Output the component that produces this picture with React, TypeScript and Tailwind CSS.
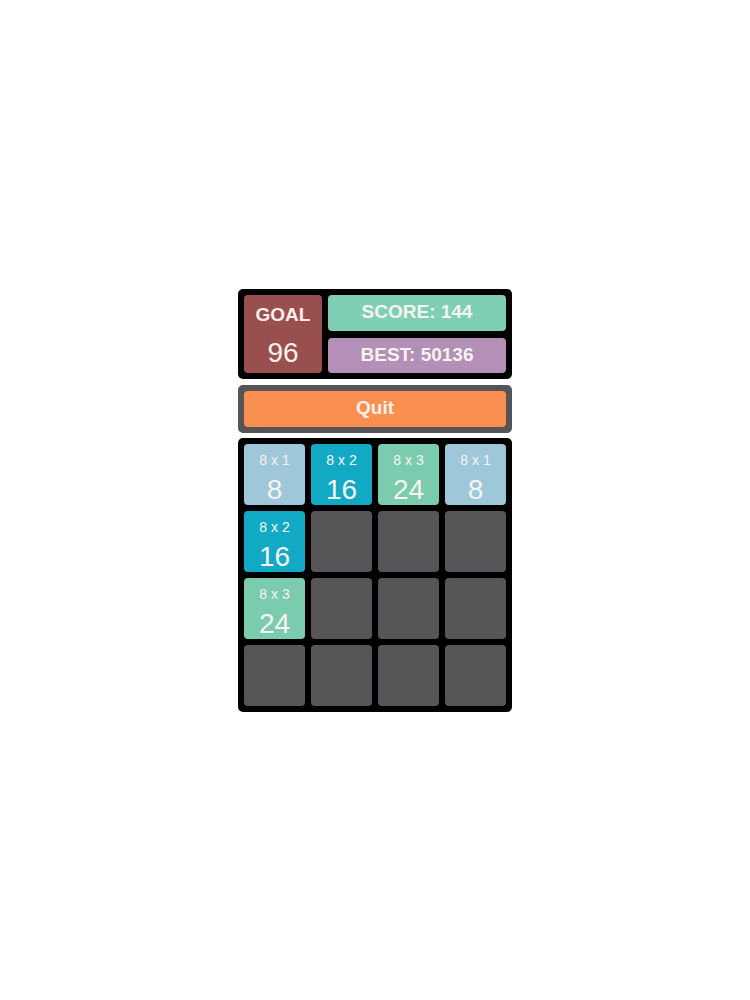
import React from 'react';

type Tile = { factor: number; value: number } | null;

const board: Tile[][] = [
  [{ factor: 1, value: 8 }, { factor: 2, value: 16 }, { factor: 3, value: 24 }, { factor: 1, value: 8 }],
  [{ factor: 2, value: 16 }, null, null, null],
  [{ factor: 3, value: 24 }, null, null, null],
  [null, null, null, null],
];

const tileColor: Record<number, string> = {
  1: 'bg-[#9fc7da]',
  2: 'bg-[#12a9c4]',
  3: 'bg-[#7bcbae]',
};

const TileCell: React.FC<{ tile: Tile }> = ({ tile }) => {
  if (!tile) return <div className="h-[61px] w-[61px] rounded-[4px] bg-[#575557]" />;
  return (
    <div
      className={`flex h-[61px] w-[61px] flex-col items-center rounded-[4px] text-[#f7f3ee] ${tileColor[tile.factor]}`}
    >
      <span className="mt-[7px] text-[14px] leading-[18px]">8 x {tile.factor}</span>
      <span className="mt-[5px] text-[28px] leading-[32px]">{tile.value}</span>
    </div>
  );
};

export default function App() {
  return (
    <div
      className="flex min-h-screen items-center justify-center bg-white"
      style={{ fontFamily: '"Liberation Sans", Arial, sans-serif' }}
    >
      <div className="flex w-[274px] flex-col">
        <div className="flex gap-[6px] rounded-[5px] bg-black p-[6px]">
          <div className="flex h-[78px] w-[78px] flex-col items-center rounded-[4px] bg-[#9a4f4f] text-[#f7f0ea]">
            <span className="mt-[9px] text-[19px] font-bold leading-[22px]">GOAL</span>
            <span className="mt-[12px] text-[28px] leading-[30px]">96</span>
          </div>
          <div className="flex flex-1 flex-col gap-[7px]">
            <div className="flex h-[36px] items-center justify-center rounded-[4px] bg-[#7fcfb6] text-[19px] font-bold text-[#f7f3ee]">
              SCORE: 144
            </div>
            <div className="flex h-[35px] items-center justify-center rounded-[4px] bg-[#b48fb7] text-[19px] font-bold text-[#f7f3ee]">
              BEST: 50136
            </div>
          </div>
        </div>

        <div className="mt-[6px] rounded-[5px] bg-[#565456] p-[6px]">
          <button className="flex h-[36px] w-full items-center justify-center rounded-[4px] bg-[#f98f50] text-[19px] font-bold text-[#f9f1e9]">
            Quit
          </button>
        </div>

        <div className="mt-[5px] grid grid-cols-4 gap-[6px] rounded-[5px] bg-black p-[6px]">
          {board.flat().map((tile, i) => (
            <TileCell key={i} tile={tile} />
          ))}
        </div>
      </div>
    </div>
  );
}
